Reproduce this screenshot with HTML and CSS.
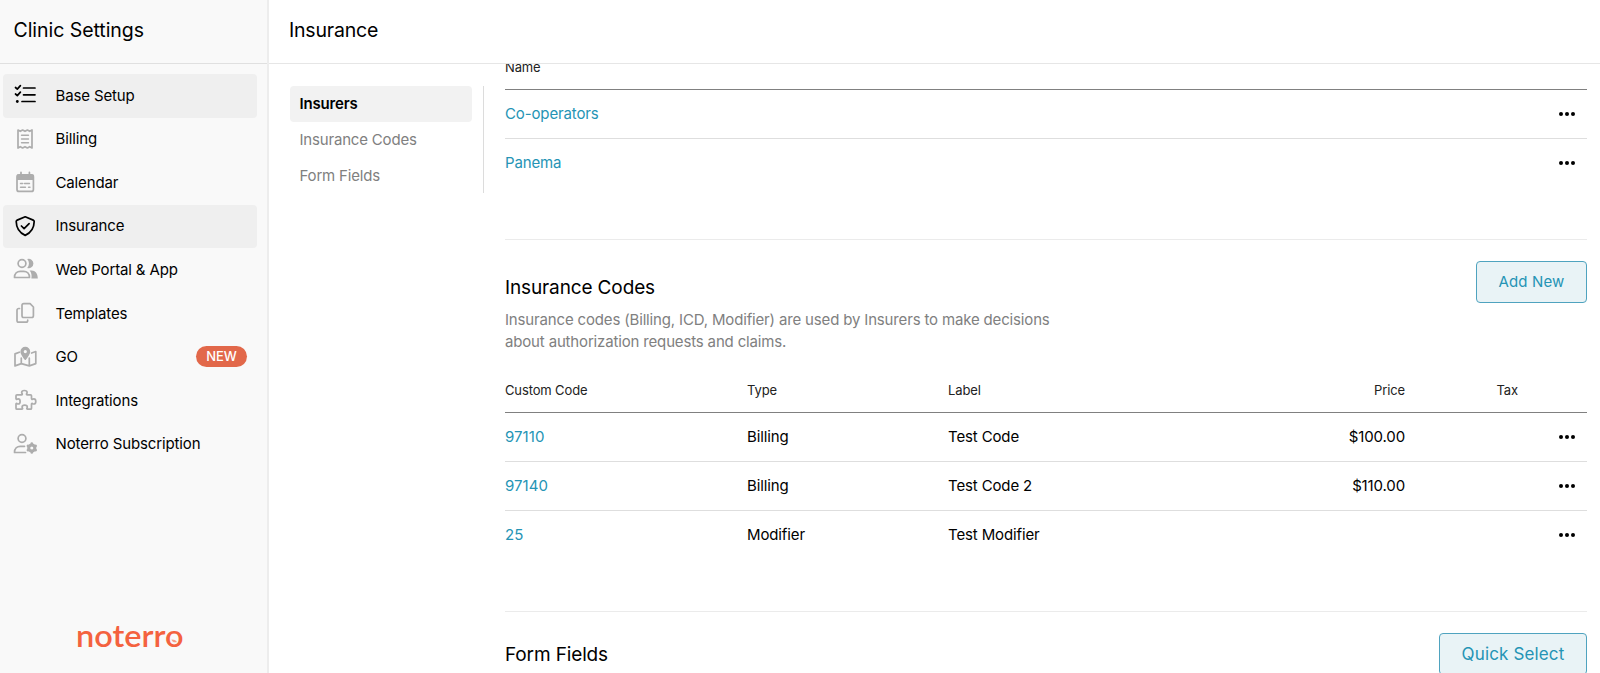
FILE: index.html
```html
<!DOCTYPE html>
<html lang="en">
<head>
    <meta charset="UTF-8">
    <meta name="viewport" content="width=device-width, initial-scale=1.0">
    <title>Clinic Settings - Insurance</title>
    <link rel="stylesheet" href="styles.css">
</head>
<body>
    <div class="app">
        <aside class="sidebar">
            <h1 class="page-title">Clinic Settings</h1>

            <nav class="main-nav">
                <a class="nav-item active">
                    <svg class="icon" viewBox="0 0 24 24"><path d="M2.500 4.500l1.800 1.600L7.400 2.600M2.500 11l1.800 1.600L7.400 9.100"/><path d="M10.500 5h11.500M10.500 11.800h11.500M9 18.500h13"/><circle class="solid" cx="4.300" cy="18.500" r="1.400"/></svg>
                    <span>Base Setup</span>
                </a>
                <a class="nav-item">
                    <svg class="icon" viewBox="0 0 24 24"><path d="M5 3l2.300 1.300 2.300-1.300 2.400 1.300 2.400-1.300 2.300 1.300 2.300-1.300v18l-2.300-1.300-2.300 1.300-2.400-1.300-2.400 1.300-2.300-1.300-2.300 1.300z"/><path class="thin" d="M8.500 8.300h7M8.500 12h7M8.500 15.700h7"/></svg>
                    <span>Billing</span>
                </a>
                <a class="nav-item">
                    <svg class="icon" viewBox="0 0 24 24"><rect x="4" y="4.800" width="16.400" height="16.600" rx="2"/><path class="solid" d="M4 4.500h16.400v5.500H4z"/><path d="M8 2.300v3M16.400 2.300v3"/><path class="thin" d="M7.500 13.500h2.200M11.500 13.500h5M7.500 17.200h5M15.500 17.200h1.500"/></svg>
                    <span>Calendar</span>
                </a>
                <a class="nav-item active">
                    <svg class="icon" viewBox="0 0 24 24"><path d="M12.200 2.800l8 3.300c.7.300 1 .8 1 1.500-.1 5.200-2.500 11-9 13.800-6.500-2.800-8.900-8.600-9-13.800 0-.7.300-1.200 1-1.500z"/><path d="M8.400 12l2.700 2.700 5-5"/></svg>
                    <span>Insurance</span>
                </a>
                <a class="nav-item">
                    <svg class="icon" viewBox="0 0 24 24"><circle cx="9" cy="6.500" r="3.900"/><path d="M1.500 20.500c0-4 2.600-6.200 5.800-6.200h3.400c3.200 0 5.800 2.200 5.800 6.200z"/><path class="fill" d="M14.200 2a4.700 4.700 0 1 1 0 8.900 6.500 6.500 0 0 0 0-8.900zM16.600 13.400h2.200c3.300 0 6 2.700 6 8h-6.400c.6-3.400-.1-6-1.800-8z"/></svg>
                    <span>Web Portal &amp; App</span>
                </a>
                <a class="nav-item">
                    <svg class="icon" viewBox="0 0 24 24"><path d="M10.700 2.700h6.400l3.300 3.300v8.800a1.700 1.700 0 0 1-1.700 1.700h-8a1.700 1.700 0 0 1-1.700-1.700V4.400a1.700 1.700 0 0 1 1.700-1.700z"/><path d="M6.500 7.500H5.700A1.700 1.700 0 0 0 4 9.200v10.300a1.700 1.700 0 0 0 1.700 1.700h7.300a1.700 1.700 0 0 0 1.700-1.700V19.200"/></svg>
                    <span>Templates</span>
                </a>
                <a class="nav-item">
                    <svg class="icon" viewBox="0 0 24 24"><path d="M6.300 7.200L2 8.900v12l6.300-2.300 8 2.300 6.500-2.300V6.500l-4.200 1.500M8.300 13v5.500M16.300 13v7.800"/><path class="fill" fill-rule="evenodd" d="M12.300 1.800a4.900 4.900 0 0 0-4.900 4.900c0 2.300 3 6.400 4.300 8 .3.400.9.400 1.200 0 1.300-1.600 4.300-5.700 4.300-8a4.900 4.900 0 0 0-4.900-4.900zm0 3.200a1.600 1.600 0 1 1 0 3.200 1.600 1.600 0 0 1 0-3.200z"/></svg>
                    <span>GO</span>
                    <span class="badge">NEW</span>
                </a>
                <a class="nav-item">
                    <svg class="icon" viewBox="0 0 24 24"><path d="M4 6.800h4.600c.6 0 .9-.5.600-1-.3-.4-.5-.8-.5-1.300 0-1.200 1.200-2 2.700-2s2.700.8 2.700 2c0 .5-.2.900-.5 1.300-.3.500 0 1 .6 1h3.300c.6 0 1 .4 1 1v2.800c0 .6.500.9 1 .6.400-.3.800-.4 1.300-.4 1.200 0 2 1.200 2 2.600s-.8 2.600-2 2.600c-.5 0-.9-.1-1.300-.4-.5-.3-1 0-1 .6v4c0 .6-.4 1-1 1h-3c-.6 0-.9-.5-.6-1 .3-.4.400-.7.400-1.200 0-1.100-1.200-1.900-2.600-1.900s-2.600.8-2.600 1.900c0 .5.100.8.400 1.200.3.500 0 1-.6 1H4c-.6 0-1-.4-1-1v-4c0-.6.500-.9 1-.6.400.3.700.4 1.200.4 1.100 0 1.900-1.200 1.900-2.600s-.8-2.600-1.900-2.600c-.5 0-.8.100-1.200.4-.5.300-1 0-1-.6V7.800c0-.6.400-1 1-1z"/></svg>
                    <span>Integrations</span>
                </a>
                <a class="nav-item">
                    <svg class="icon" viewBox="0 0 24 24"><circle cx="9" cy="6.500" r="3.900"/><path d="M12.500 20.500h-11c0-4 2.600-6.200 5.800-6.200h4.200"/><circle cx="18.800" cy="16" r="3.100" stroke-width="3"/><path d="M18.800 11.600v1.400M18.800 19v1.400M14.900 13.800l1.300.700M21.400 17.500l1.300.7M14.900 18.200l1.300-.7M21.400 14.500l1.300-.7" stroke-width="2.600"/></svg>
                    <span>Noterro Subscription</span>
                </a>
            </nav>

            <div class="brand">
                <svg class="logo" viewBox="0 0 110 36">
                    <text x="-1" y="24" textLength="107.500" lengthAdjust="spacingAndGlyphs">noterro</text>
                    <path opacity="0.6" d="M94.500 16.500c2.600 0 4.600.8 5.500 2.600-2.400.7-4.900 0-5.500-2.600z"/>
                </svg>
            </div>
        </aside>

        <main class="main">
            <header class="topbar">
                <h2 class="page-title">Insurance</h2>
            </header>

            <div class="body">
                <nav class="sub-nav">
                    <a class="sub-item active">Insurers</a>
                    <a class="sub-item">Insurance Codes</a>
                    <a class="sub-item">Form Fields</a>
                </nav>

                <div class="content">
                    <section class="section insurers">
                        <div class="row head"><span class="col-code">Name</span></div>
                        <div class="row"><a class="link">Co-operators</a><span class="dots"><i></i><i></i><i></i></span></div>
                        <div class="row"><a class="link">Panema</a><span class="dots"><i></i><i></i><i></i></span></div>
                    </section>

                    <section class="section codes">
                        <div class="section-head">
                            <div class="section-text">
                                <h3>Insurance Codes</h3>
                                <p>Insurance codes (Billing, ICD, Modifier) are used by Insurers to make decisions about authorization requests and claims.</p>
                            </div>
                            <button class="btn">Add New</button>
                        </div>

                        <div class="row head">
                            <span class="col-code">Custom Code</span>
                            <span class="col-type">Type</span>
                            <span class="col-label">Label</span>
                            <span class="col-price">Price</span>
                            <span class="col-tax">Tax</span>
                        </div>
                        <div class="row">
                            <a class="col-code link number">97110</a>
                            <span class="col-type">Billing</span>
                            <span class="col-label">Test Code</span>
                            <span class="col-price">$100.00</span>
                            <span class="dots"><i></i><i></i><i></i></span>
                        </div>
                        <div class="row">
                            <a class="col-code link number">97140</a>
                            <span class="col-type">Billing</span>
                            <span class="col-label">Test Code 2</span>
                            <span class="col-price">$110.00</span>
                            <span class="dots"><i></i><i></i><i></i></span>
                        </div>
                        <div class="row">
                            <a class="col-code link number">25</a>
                            <span class="col-type">Modifier</span>
                            <span class="col-label">Test Modifier</span>
                            <span class="dots"><i></i><i></i><i></i></span>
                        </div>
                    </section>

                    <section class="section fields">
                        <div class="section-head">
                            <div class="section-text">
                                <h3>Form Fields</h3>
                            </div>
                            <button class="btn btn-lg">Quick Select</button>
                        </div>
                    </section>
                </div>
            </div>
        </main>
    </div>
</body>
</html>
```
FILE: styles.css
```css
* {
    box-sizing: border-box;
}
body {
    margin: 0;
    font-family: Inter, sans-serif;
    font-size: 15px;
    letter-spacing: -0.13px;
    color: #000;
    background: #fff;
    overflow: hidden;
}
.app {
    display: flex;
    height: 100vh;
}
.page-title {
    margin: 0;
    height: 64px;
    padding-left: 13.5px;
    border-bottom: 1px solid #e0e0e0;
    font-size: 19.5px;
    font-weight: 400;
    letter-spacing: -0.05px;
    line-height: 60px;
}

/* Sidebar */
.sidebar {
    display: flex;
    flex-direction: column;
    width: 269px;
    flex-shrink: 0;
    background: #f9f9f9;
    border-right: 2px solid #ededed;
}
.main-nav {
    padding: 10px 10px 0 3px;
}
.nav-item {
    display: flex;
    align-items: center;
    height: 43.55px;
    padding: 0 10px 1px;
    border-radius: 4px;
}
.nav-item.active {
    background: #efefef;
}
.icon {
    width: 24px;
    height: 24px;
    margin-right: 18.5px;
    overflow: visible;
    fill: none;
    stroke: #adadad;
    stroke-width: 1.7;
    stroke-linecap: round;
    stroke-linejoin: round;
}
.icon .thin {
    stroke-width: 1.4;
}
.icon .solid {
    fill: #adadad;
    stroke: none;
}
.icon .fill {
    fill: #adadad;
    stroke: none;
}
.active .icon {
    stroke: #000;
}
.active .icon .solid {
    fill: #000;
}
.badge {
    margin-left: auto;
    width: 51px;
    height: 21px;
    border-radius: 11px;
    background: #e2684a;
    color: #fff;
    font-size: 13px;
    font-weight: 500;
    letter-spacing: 0;
    line-height: 21px;
    text-align: center;
}
.brand {
    margin-top: auto;
    padding: 0 0 14px 77px;
}
.logo {
    display: block;
    width: 110px;
    height: 36px;
    overflow: visible;
    fill: #f4623f;
    font-family: Lato, sans-serif;
    font-size: 30px;
    font-weight: 600;
    letter-spacing: 0;
}

/* Main area */
.main {
    display: flex;
    flex-direction: column;
    flex: 1;
    min-width: 0;
}
.topbar .page-title {
    padding-left: 20px;
    border-color: #e6e6e6;
    letter-spacing: -0.2px;
}
.body {
    display: flex;
    flex: 1;
    min-height: 0;
    padding: 0 13px 0 21px;
    overflow: hidden;
}
.sub-nav {
    width: 194px;
    height: 107px;
    margin-top: 22px;
    padding-right: 11px;
    border-right: 1px solid #dcdcdc;
    letter-spacing: -0.18px;
}
.sub-item {
    display: block;
    height: 36px;
    padding-left: 9.5px;
    border-radius: 4px;
    color: #808080;
    line-height: 36px;
}
.sub-item.active {
    background: #f2f2f2;
    color: #000;
    font-weight: 600;
}
.content {
    flex: 1;
    margin-left: 21px;
}
.section {
    border-top: 1px solid #ebebeb;
}
.insurers {
    height: 195px;
    margin-top: -20px;
}
.codes {
    height: 372px;
}
.section-head {
    display: flex;
    justify-content: space-between;
    align-items: flex-start;
    padding-top: 21px;
}
.codes .section-head {
    height: 128px;
}
.section h3 {
    margin: 14px 0 0;
    font-size: 19px;
    font-weight: 400;
    line-height: 26px;
}
.fields h3 {
    margin-top: 9px;
}
.section p {
    width: 560px;
    margin: 8px 0 0;
    color: #808080;
    letter-spacing: -0.16px;
    line-height: 22px;
}
.btn {
    width: 111px;
    height: 42px;
    padding-bottom: 3px;
    border: 1px solid #4fa3bf;
    border-radius: 4px;
    background: #e9f3f6;
    color: #2594b5;
    font-family: inherit;
    font-size: 15px;
    letter-spacing: 0.15px;
}
.btn-lg {
    width: 148px;
    padding-bottom: 1px;
    font-size: 17px;
}

/* Table rows */
.row {
    display: flex;
    align-items: center;
    height: 49px;
    padding-bottom: 1px;
    border-bottom: 1px solid #dedede;
}
.row:last-child {
    border-color: transparent;
}
.row.head {
    height: 45px;
    padding-bottom: 0;
    border-color: #808080;
    color: #222;
    font-size: 13px;
}
.col-code {
    width: 242px;
}
.col-type {
    width: 201px;
}
.col-label {
    width: 300px;
}
.col-price {
    width: 157px;
    text-align: right;
}
.col-tax {
    width: 113px;
    text-align: right;
}
.link {
    color: #2594b5;
}
.number {
    letter-spacing: 0.05px;
}
.dots {
    display: flex;
    gap: 2px;
    margin-left: auto;
    padding-right: 12px;
}
.dots i {
    width: 4px;
    height: 4px;
    border-radius: 50%;
    background: #000;
}
```
